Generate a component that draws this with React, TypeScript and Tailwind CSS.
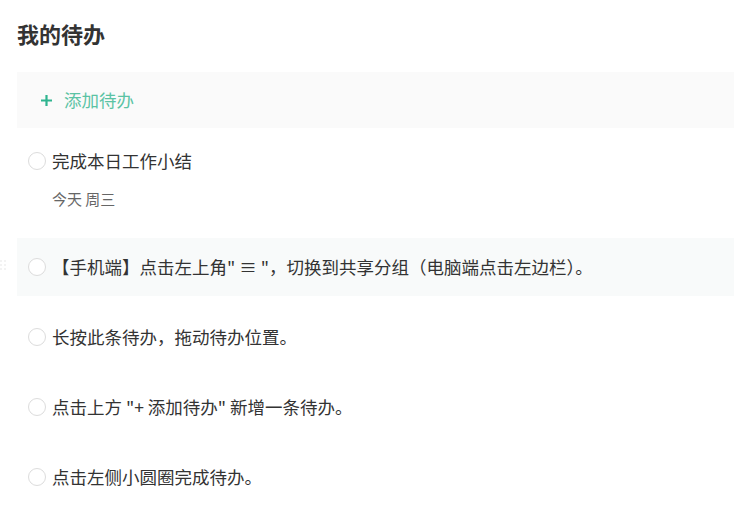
import React from 'react';

const FONT = { fontFamily: '"Noto Sans CJK SC", "Noto Sans", sans-serif' };

interface Todo {
  text: string;
  sub?: string;
  active?: boolean;
}

const todos: Todo[] = [
  { text: '完成本日工作小结', sub: '今天 周三' },
  { text: '【手机端】点击左上角" ≡ "，切换到共享分组（电脑端点击左边栏）。', active: true },
  { text: '长按此条待办，拖动待办位置。' },
  { text: '点击上方 "+ 添加待办" 新增一条待办。' },
  { text: '点击左侧小圆圈完成待办。' },
];

function Circle() {
  return <span className="w-[18px] h-[18px] rounded-full border-[1.5px] border-[#dcdcdc] bg-white shrink-0" />;
}

function Grip() {
  return (
    <div className="absolute left-[-17px] top-[22px] grid grid-cols-2 gap-[2px]">
      {[0, 1, 2, 3, 4, 5].map(i => (
        <span key={i} className="w-[2px] h-[2px] rounded-full bg-[#efefef]" />
      ))}
    </div>
  );
}

export default function App() {
  return (
    <div className="w-[734px] h-[529px] bg-white overflow-hidden pl-[17px] pt-[19px]" style={FONT}>
      <h1 className="text-[22px] leading-[28px] font-bold text-[#333]">我的待办</h1>

      <div className="mt-[25px] h-[56px] bg-[#fafafa] flex items-center pl-[23px] gap-[11px]">
        <svg width="13" height="13" viewBox="0 0 13 13" className="shrink-0">
          <path d="M6.5 1v11M1 6.5h11" stroke="#2fb48f" strokeWidth="2.2" />
        </svg>
        <span className="text-[17.5px] leading-[22px] text-[#5bc3a4]">添加待办</span>
      </div>

      <div className="mt-[4px] flex flex-col gap-[12px]">
        {todos.map((t, idx) =>
          t.sub ? (
            <div key={idx} className="pl-[11px] pt-[18px] pb-[17px]">
              <div className="flex items-center gap-[6px]">
                <Circle />
                <span className="text-[17.5px] leading-[22px] text-[#333]">{t.text}</span>
              </div>
              <div className="mt-[17px] pl-[24px] text-[15px] leading-[20px] text-[#666]">{t.sub}</div>
            </div>
          ) : (
            <div
              key={idx}
              className={`relative h-[58px] pl-[11px] flex items-center gap-[6px] ${t.active ? 'bg-[#f8fafa]' : ''}`}
            >
              {t.active && <Grip />}
              <Circle />
              <span className="text-[17.5px] leading-[22px] text-[#333] whitespace-nowrap">{t.text}</span>
            </div>
          )
        )}
      </div>
    </div>
  );
}
